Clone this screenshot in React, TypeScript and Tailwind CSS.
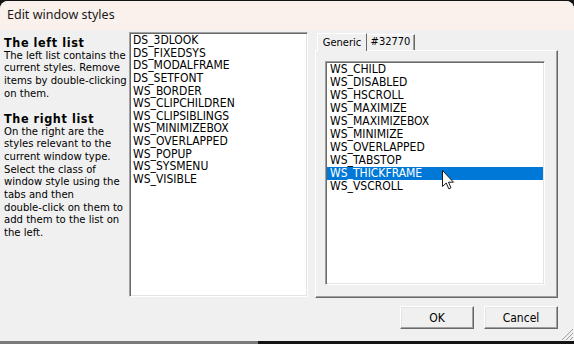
import React from 'react';

const leftItems = [
  'DS_3DLOOK',
  'DS_FIXEDSYS',
  'DS_MODALFRAME',
  'DS_SETFONT',
  'WS_BORDER',
  'WS_CLIPCHILDREN',
  'WS_CLIPSIBLINGS',
  'WS_MINIMIZEBOX',
  'WS_OVERLAPPED',
  'WS_POPUP',
  'WS_SYSMENU',
  'WS_VISIBLE',
];

const rightItems = [
  'WS_CHILD',
  'WS_DISABLED',
  'WS_HSCROLL',
  'WS_MAXIMIZE',
  'WS_MAXIMIZEBOX',
  'WS_MINIMIZE',
  'WS_OVERLAPPED',
  'WS_TABSTOP',
  'WS_THICKFRAME',
  'WS_VSCROLL',
];

const helpLines = [
  { t: 'The left list', bold: true },
  { t: 'The left list contains the' },
  { t: 'current styles. Remove' },
  { t: 'items by double-clicking' },
  { t: 'on them.' },
  { t: '' },
  { t: 'The right list', bold: true },
  { t: 'On the right are the' },
  { t: 'styles relevant to the' },
  { t: 'current window type.' },
  { t: 'Select the class of' },
  { t: 'window style using the' },
  { t: 'tabs and then' },
  { t: 'double-click on them to' },
  { t: 'add them to the list on' },
  { t: 'the left.' },
];

const sunken =
  'bg-white border border-t-[#a0a0a0] border-l-[#a0a0a0] border-b-white border-r-white shadow-[inset_1px_1px_0_#696969,inset_-1px_-1px_0_#e3e3e3]';

const Button: React.FC<{ label: string }> = ({ label }) => (
  <div className="w-[74px] h-[23px] flex items-center justify-center bg-[#f0f0f0] border border-t-white border-l-white border-b-[#696969] border-r-[#696969] shadow-[inset_-1px_-1px_0_#a0a0a0,inset_1px_1px_0_#e3e3e3] text-[12px] text-black">
    {label}
  </div>
);

const Cursor: React.FC = () => (
  <svg className="absolute left-[442px] top-[170px]" width="13" height="20" viewBox="0 0 13 20">
    <path
      d="M0.5 0.5 L0.5 16.5 L4.2 13 L6.8 18.8 L9 17.8 L6.5 12.2 L11.5 12.2 Z"
      fill="#ffffff"
      stroke="#1a1a1a"
      strokeWidth="1"
      strokeLinejoin="round"
    />
  </svg>
);

const App: React.FC = () => {
  return (
    <div className="w-[574px] h-[344px] bg-[#141414] overflow-hidden relative font-['DejaVu_Sans_Condensed','Liberation_Sans',Arial,sans-serif]">
      <div className="mt-[1px] w-[574px] h-[340px] rounded-t-[8px] overflow-hidden bg-[#f0f0f0] flex flex-col">
        {/* title bar */}
        <div className="h-[29px] bg-[#faf0ec] flex items-center pl-[7px] text-[12.5px] text-[#1a1a1a] font-['Noto_Sans','Open_Sans',sans-serif]">
          Edit window styles
        </div>

        <div className="flex pt-[2px] h-[268px]">
          {/* help text */}
          <div className="w-[129px] shrink-0 pl-[4px] pt-[5px] text-[11.2px] leading-[12.65px] text-black whitespace-nowrap">
            {helpLines.map((l, i) =>
              l.t === '' ? (
                <div key={i} className="h-[12.65px]" />
              ) : (
                <div key={i} className={l.bold ? 'font-bold text-[12.5px] tracking-[0.6px]' : ''}>
                  {l.t}
                </div>
              )
            )}
          </div>

          {/* left list */}
          <div className={`w-[179px] h-[265px] shrink-0 ${sunken} pt-[1px] pl-[2px]`}>
            {leftItems.map((s) => (
              <div key={s} className="h-[12.65px] leading-[12.65px] text-[12px] text-black pl-[1px]">
                {s}
              </div>
            ))}
          </div>

          {/* tab control */}
          <div className="ml-[7px] w-[243px] shrink-0 flex flex-col">
            <div className="flex items-end h-[18px] pl-[2px] whitespace-nowrap">
              <div className="relative z-10 w-[50px] h-[18px] bg-[#f0f0f0] border-t border-l border-white border-r border-r-[#696969] flex items-start justify-center pt-[1px] text-[11px] text-black -mb-[1px]">
                Generic
              </div>
              <div className="w-[48px] h-[16px] bg-[#f0f0f0] border-t border-white border-r border-r-[#696969] shadow-[inset_-1px_0_0_#a0a0a0] flex items-center justify-center text-[11px] text-black">
                #32770
              </div>
            </div>
            <div className="h-[248px] border border-t-white border-l-white border-b-[#696969] border-r-[#696969] shadow-[inset_-1px_-1px_0_#a0a0a0] pt-[10px] pl-[9px]">
              <div className={`w-[220px] h-[224px] ${sunken} p-[1px]`}>
                {rightItems.map((s) => (
                  <div
                    key={s}
                    className={`h-[13px] leading-[13px] text-[12px] pl-[3px] ${
                      s === 'WS_THICKFRAME' ? 'bg-[#0078d7] text-white' : 'text-black'
                    }`}
                  >
                    {s}
                  </div>
                ))}
              </div>
            </div>
          </div>
        </div>

        {/* buttons */}
        <div className="flex justify-end gap-[10px] pr-[16px] pt-[8px]">
          <Button label="OK" />
          <Button label="Cancel" />
        </div>
      </div>

      {/* resize grip */}
      <svg className="absolute left-[560px] top-[326px]" width="14" height="15" viewBox="0 0 14 15">
        <line x1="13" y1="3" x2="2" y2="14" stroke="#a0a0a0" strokeWidth="1" />
        <line x1="13" y1="7" x2="6" y2="14" stroke="#a0a0a0" strokeWidth="1" />
        <line x1="13" y1="11" x2="10" y2="14" stroke="#a0a0a0" strokeWidth="1" />
      </svg>

      {/* bottom edge */}
      <div className="absolute left-0 bottom-0 w-[258px] h-[3px] bg-[#7a7a7a]" />

      <Cursor />
    </div>
  );
};

export default App;
